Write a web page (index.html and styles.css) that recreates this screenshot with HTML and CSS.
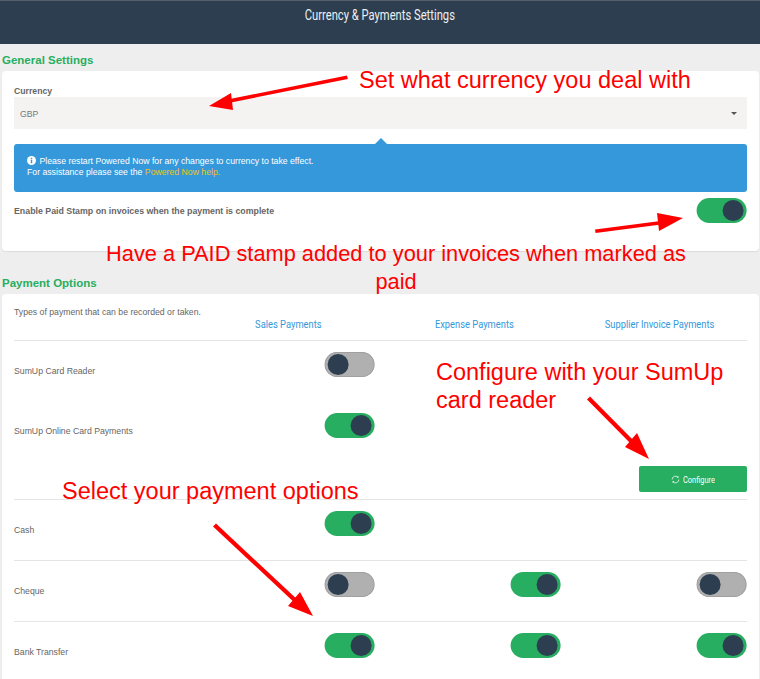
FILE: index.html
```html
<!DOCTYPE html>
<html lang="en">
  <head>
    <meta charset="UTF-8" />
    <meta name="viewport" content="width=device-width, initial-scale=1.0" />
    <title>Currency &amp; Payments Settings</title>
    <link rel="stylesheet" href="styles.css">
  </head>
  <body>
    <header class="topbar"><span>Currency &amp; Payments Settings</span></header>

    <h2 class="section-title">General Settings</h2>
    <section class="card general-card">
      <label class="field-label">Currency</label>
      <div class="select-box">
        <span>GBP</span>
        <span class="caret"></span>
      </div>
      <div class="info-box">
        <div>
          <svg class="info-icon" viewBox="0 0 10 10" width="9" height="9">
            <circle cx="5" cy="5" r="5" fill="#fff" />
            <rect x="4.2" y="4.2" width="1.6" height="3.8" fill="#3498db" />
            <rect x="4.2" y="2" width="1.6" height="1.5" fill="#3498db" />
          </svg>
          Please restart Powered Now for any changes to currency to take effect.
        </div>
        <div>For assistance please see the <a class="help-link">Powered Now help.</a></div>
      </div>
      <div class="stamp-row">
        <span class="stamp-label">Enable Paid Stamp on invoices when the payment is complete</span>
        <span class="toggle on"></span>
      </div>
    </section>

    <h2 class="section-title payment-title">Payment Options</h2>
    <section class="card payment-card">
      <div class="pay-row head-row">
        <div class="pay-intro">Types of payment that can be recorded or taken.</div>
        <div class="col-head"><span>Sales Payments</span></div>
        <div class="col-head"><span>Expense Payments</span></div>
        <div class="col-head"><span>Supplier Invoice Payments</span></div>
      </div>

      <div class="pay-row plain">
        <div class="pay-name">SumUp Card Reader</div>
        <div class="pay-cell"><span class="toggle"></span></div>
        <div class="pay-cell"></div>
        <div class="pay-cell"></div>
      </div>
      <div class="pay-row plain no-line">
        <div class="pay-name">SumUp Online Card Payments</div>
        <div class="pay-cell"><span class="toggle on"></span></div>
        <div class="pay-cell"></div>
        <div class="pay-cell"></div>
      </div>
      <div class="config-row">
        <button class="config-button">
          <svg viewBox="0 0 12 12" width="9" height="9" fill="none" stroke="#fff" stroke-width="1">
            <path d="M1.5 6a4.5 4.5 0 0 1 8-2.8M10.5 6a4.5 4.5 0 0 1-8 2.8" />
            <path d="M9.5 1.6v1.8H7.8M2.5 10.4V8.6h1.7" />
          </svg>
          <span>Configure</span>
        </button>
      </div>

      <div class="pay-row">
        <div class="pay-name">Cash</div>
        <div class="pay-cell"><span class="toggle on"></span></div>
        <div class="pay-cell"></div>
        <div class="pay-cell"></div>
      </div>
      <div class="pay-row">
        <div class="pay-name">Cheque</div>
        <div class="pay-cell"><span class="toggle"></span></div>
        <div class="pay-cell"><span class="toggle on"></span></div>
        <div class="pay-cell"><span class="toggle"></span></div>
      </div>
      <div class="pay-row">
        <div class="pay-name">Bank Transfer</div>
        <div class="pay-cell"><span class="toggle on"></span></div>
        <div class="pay-cell"><span class="toggle on"></span></div>
        <div class="pay-cell"><span class="toggle on"></span></div>
      </div>
    </section>

    <!-- red notes drawn on top of the screenshot -->
    <svg class="arrows" width="760" height="679" viewBox="0 0 760 679">
      <g fill="#ff0000" stroke="none">
        <polygon points="347,75.5 347.8,79 226,103.5 225,100" />
        <polygon points="209,106 231,93 233,110" />
        <polygon points="595,229.5 595.6,233 665,224 664.4,220.5" />
        <polygon points="683,218 657,213 659,231" />
        <polygon points="590,396.5 587,399.5 634,447 637,444" />
        <polygon points="649,459 625,447 637,433" />
        <polygon points="216,523.5 213,526.5 297,605 300,602" />
        <polygon points="313,616 288,606 300,592" />
      </g>
    </svg>
    <div class="note note-currency">Set what currency you deal with</div>
    <div class="note note-stamp">Have a PAID stamp added to your invoices when marked as paid</div>
    <div class="note note-sumup">Configure with your SumUp card reader</div>
    <div class="note note-options">Select your payment options</div>
  </body>
</html>
```

FILE: styles.css
```css
* {
  box-sizing: border-box;
}

html,
body {
  height: 679px;
  overflow: hidden;
}

body {
  position: relative;
  margin: 0;
  background: #eeeeee;
  font-family: "Liberation Sans", sans-serif;
  font-size: 8.7px;
  color: #666666;
}

.topbar {
  height: 44px;
  padding-top: 7px;
  background: #2c3e50;
  border-top: 1px solid #55606c;
  color: #ecf0f1;
  font-family: "Roboto", sans-serif;
  font-size: 14px;
  line-height: 14px;
  text-align: center;
}

.topbar span {
  display: inline-block;
  transform: scaleX(0.8);
}

.section-title {
  height: 27px;
  margin: 0;
  padding: 9px 0 0 2px;
  color: #27ae60;
  font-size: 11.5px;
  line-height: 15px;
  font-weight: 700;
}

.payment-title {
  height: 43px;
  padding-top: 25px;
}

.card {
  margin: 0 1px 0 2px;
  padding: 0 12px;
  background: white;
  border-radius: 4px;
  box-shadow: 0 1px 1px rgba(0, 0, 0, 0.08);
}

.general-card {
  height: 180px;
  padding-top: 14px;
}

.field-label {
  display: block;
  height: 12px;
  font-weight: 700;
  line-height: 12px;
}

.select-box {
  display: flex;
  align-items: center;
  justify-content: space-between;
  height: 32px;
  padding: 1px 10px 0 6px;
  background: #f4f3f2;
  color: #777777;
}

.caret {
  width: 0;
  height: 0;
  border-left: 3.5px solid transparent;
  border-right: 3.5px solid transparent;
  border-top: 3.5px solid #555555;
}

.info-box {
  position: relative;
  height: 48px;
  margin-top: 15px;
  padding: 12px 13px;
  background: #3498db;
  border-radius: 3px;
  color: white;
  line-height: 11px;
}

.info-box::before {
  content: "";
  position: absolute;
  top: -6px;
  left: 361px;
  border-left: 6px solid transparent;
  border-right: 6px solid transparent;
  border-bottom: 6px solid #3498db;
}

.info-icon {
  margin-right: 1px;
  vertical-align: -1px;
}

.help-link {
  color: #f1c40f;
}

.stamp-row {
  display: flex;
  align-items: flex-start;
  justify-content: space-between;
  margin-top: 6px;
}

.stamp-label {
  padding-top: 8px;
  font-size: 8.8px;
  font-weight: 700;
}

.toggle {
  position: relative;
  display: block;
  width: 50px;
  height: 25px;
  background: #b0b0b0;
  border-radius: 13px;
  box-shadow: inset 0 0 0 1px #a0a0a0;
  transform: translateX(-0.4px);
}

.toggle::after {
  content: "";
  position: absolute;
  top: 2px;
  left: 3px;
  width: 21px;
  height: 21px;
  background: #2c3e50;
  border-radius: 50%;
}

.toggle.on {
  background: #27ae60;
  box-shadow: none;
}

.toggle.on::after {
  left: 26px;
}

.payment-card {
  height: 400px;
}

.pay-row {
  display: grid;
  grid-template-columns: 175px 186px 186px 186px;
  height: 61px;
  padding-top: 11px;
  border-top: 1px solid #e5e5e5;
}

.no-line {
  padding-top: 12px;
  border-top: none;
}

.head-row {
  position: relative;
  height: 46px;
  padding-top: 0;
  border-top: none;
}

.pay-intro {
  position: absolute;
  top: 13px;
  left: 0;
}

.col-head {
  grid-row: 1;
  padding: 24px 0 0 12px;
  color: #3498db;
  font-family: "Roboto", sans-serif;
  font-size: 10.5px;
  line-height: 13px;
  text-align: center;
}

.col-head span {
  display: inline-block;
  transform: scaleX(0.89);
}

.col-head:nth-child(2) {
  grid-column: 2;
}

.col-head:nth-child(3) {
  grid-column: 3;
}

.col-head:nth-child(4) {
  grid-column: 4;
}

.pay-name {
  padding-top: 13px;
  line-height: 12px;
}

.no-line .pay-name {
  padding-top: 12px;
}

.pay-cell {
  display: flex;
  justify-content: flex-end;
}

.config-row {
  display: flex;
  justify-content: flex-end;
  height: 37px;
  padding-top: 4px;
}

.config-button {
  display: flex;
  align-items: center;
  justify-content: center;
  gap: 3px;
  width: 108px;
  height: 26px;
  padding: 0;
  background: #27ae60;
  border: none;
  border-radius: 2px;
  color: white;
  font-family: "Roboto", sans-serif;
  font-size: 9.5px;
}

.config-button span {
  display: inline-block;
  margin-right: -9px;
  transform: scaleX(0.78);
  transform-origin: left center;
}

.arrows {
  position: absolute;
  top: 0;
  left: 0;
}

.note {
  position: absolute;
  color: #ff0000;
  font-family: "Liberation Sans", sans-serif;
  font-size: 23.5px;
  line-height: 28px;
}

.note-currency {
  top: 66px;
  left: 359px;
}

.note-stamp {
  top: 240px;
  left: 101px;
  width: 590px;
  font-size: 21.8px;
  text-align: center;
}

.note-sumup {
  top: 358px;
  left: 436px;
  width: 300px;
}

.note-options {
  top: 477px;
  left: 62px;
}
```
